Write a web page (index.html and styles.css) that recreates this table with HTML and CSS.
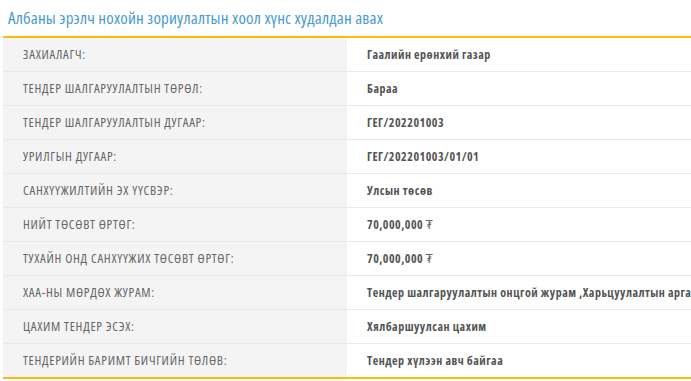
FILE: index.html
```html
<!DOCTYPE html>
<html lang="mn">
<head>
<meta charset="utf-8">
<link rel="stylesheet" href="styles.css">
</head>
<body>
<div class="page">
  <h1 class="title">Албаны эрэлч нохойн зориулалтын хоол хүнс худалдан авах</h1>
  <div class="table">
    <div class="row"><div class="label">ЗАХИАЛАГЧ:</div><div class="value">Гаалийн ерөнхий газар</div></div>
    <div class="row"><div class="label">ТЕНДЕР ШАЛГАРУУЛАЛТЫН ТӨРӨЛ:</div><div class="value">Бараа</div></div>
    <div class="row"><div class="label">ТЕНДЕР ШАЛГАРУУЛАЛТЫН ДУГААР:</div><div class="value">ГЕГ/202201003</div></div>
    <div class="row"><div class="label">УРИЛГЫН ДУГААР:</div><div class="value">ГЕГ/202201003/01/01</div></div>
    <div class="row"><div class="label">САНХҮҮЖИЛТИЙН ЭХ ҮҮСВЭР:</div><div class="value">Улсын төсөв</div></div>
    <div class="row"><div class="label">НИЙТ ТӨСӨВТ ӨРТӨГ:</div><div class="value">70,000,000 <span class="cur">₮</span></div></div>
    <div class="row"><div class="label">ТУХАЙН ОНД САНХҮҮЖИХ ТӨСӨВТ ӨРТӨГ:</div><div class="value">70,000,000 <span class="cur">₮</span></div></div>
    <div class="row"><div class="label">ХАА-НЫ МӨРДӨХ ЖУРАМ:</div><div class="value">Тендер шалгаруулалтын онцгой журам ,Харьцуулалтын арга</div></div>
    <div class="row"><div class="label">ЦАХИМ ТЕНДЕР ЭСЭХ:</div><div class="value">Хялбаршуулсан цахим</div></div>
    <div class="row"><div class="label">ТЕНДЕРИЙН БАРИМТ БИЧГИЙН ТӨЛӨВ:</div><div class="value">Тендер хүлээн авч байгаа</div></div>
  </div>
</div>
</body>
</html>
```

FILE: styles.css
```css
html, body {
  margin: 0;
  padding: 0;
  background: #ffffff;
}
.page {
  font-family: "Open Sans", "DejaVu Sans Condensed", sans-serif;
  font-stretch: 75%;
  padding: 0 0 0 3px;
}
.title {
  margin: 0;
  padding: 7px 0 0 5px;
  height: 29px;
  box-sizing: border-box;
  font-size: 17px;
  letter-spacing: 0.18px;
  font-weight: normal;
  color: #4a9bd0;
  line-height: 22px;
}
.table {
  border-top: 2px solid #fbbd08;
  border-bottom: 2px solid #fbbd08;
  margin-top: 7px;
}
.row {
  display: grid;
  grid-template-columns: 344px 1fr;
  height: 34px;
  box-sizing: border-box;
  border-top: 1px solid #e9e9e9;
  line-height: 33px;
}
.row:first-child {
  border-top: none;
  height: 33px;
}
.label {
  background: #f4f4f4;
  color: #666666;
  font-size: 13px;
  letter-spacing: 0.7px;
  padding-left: 20px;
}
.value {
  color: #555555;
  font-size: 12px;
  letter-spacing: 0.5px;
  font-weight: bold;
  padding-left: 20px;
  white-space: nowrap;
}
.cur {
  font-weight: normal;
  color: #666666;
}
```
